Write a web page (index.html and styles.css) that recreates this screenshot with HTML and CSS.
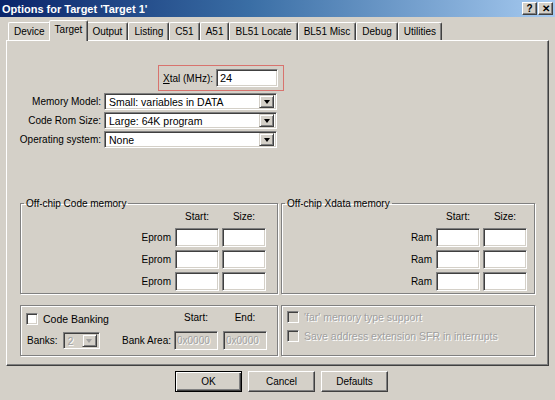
FILE: index.html
```html
<!DOCTYPE html>
<html>
<head>
<meta charset="utf-8">
<title>Options for Target 'Target 1'</title>
<link rel="stylesheet" href="styles.css">
</head>
<body>
<div class="dialog">
  <div class="titlebar">
    <span class="title">Options for Target 'Target 1'</span>
    <span class="tbtns"><span class="tbtn">?</span><span class="tbtn">✕</span></span>
  </div>
  <div class="tabs">
    <span class="tab">Device</span>
    <span class="tab active">Target</span>
    <span class="tab">Output</span>
    <span class="tab">Listing</span>
    <span class="tab">C51</span>
    <span class="tab">A51</span>
    <span class="tab">BL51 Locate</span>
    <span class="tab">BL51 Misc</span>
    <span class="tab">Debug</span>
    <span class="tab">Utilities</span>
  </div>
  <div class="panel">
    <div class="xtal">
      <span class="lbl"><u>X</u>tal (MHz):</span>
      <span class="edit wide">24</span>
    </div>
    <div class="selects">
      <span class="rlbl">Memory Model:</span>
      <span class="combo"><span class="ctext">Small: variables in DATA</span><span class="arrow"><i></i></span></span>
      <span class="rlbl">Code Rom Size:</span>
      <span class="combo"><span class="ctext">Large: 64K program</span><span class="arrow"><i></i></span></span>
      <span class="rlbl">Operating system:</span>
      <span class="combo"><span class="ctext">None</span><span class="arrow"><i></i></span></span>
    </div>
    <div class="groups">
      <fieldset class="group code">
        <legend>Off-chip Code memory</legend>
        <div class="memgrid">
          <span></span><span class="hdr">Start:</span><span class="hdr">Size:</span>
          <span class="rowlbl">Eprom</span><span class="edit"></span><span class="edit"></span>
          <span class="rowlbl">Eprom</span><span class="edit"></span><span class="edit"></span>
          <span class="rowlbl">Eprom</span><span class="edit"></span><span class="edit"></span>
        </div>
      </fieldset>
      <fieldset class="group xdata">
        <legend>Off-chip Xdata memory</legend>
        <div class="memgrid">
          <span></span><span class="hdr">Start:</span><span class="hdr">Size:</span>
          <span class="rowlbl">Ram</span><span class="edit"></span><span class="edit"></span>
          <span class="rowlbl">Ram</span><span class="edit"></span><span class="edit"></span>
          <span class="rowlbl">Ram</span><span class="edit"></span><span class="edit"></span>
        </div>
      </fieldset>
    </div>
    <div class="groups bottom">
      <div class="box banking">
        <div class="brow first">
          <span class="check"><span class="cb"></span>Code Banking</span>
          <span class="spacer"></span>
          <span class="hdr col">Start:</span><span class="hdr col">End:</span>
        </div>
        <div class="brow">
          <span class="banks">Banks:</span>
          <span class="combo small dis"><span class="ctext">2</span><span class="arrow"><i></i></span></span>
          <span class="spacer"></span>
          <span class="bankarea">Bank Area:</span>
          <span class="edit dis col">0x0000</span><span class="edit dis col">0x0000</span>
        </div>
      </div>
      <div class="box farbox">
        <div class="check distext"><span class="cb dis"></span>'far' memory type support</div>
        <div class="check distext"><span class="cb dis"></span>Save address extension SFR in interrupts</div>
      </div>
    </div>
  </div>
  <div class="buttons">
    <span class="btn default"><span>OK</span></span>
    <span class="btn"><span>Cancel</span></span>
    <span class="btn"><span>Defaults</span></span>
  </div>
</div>
</body>
</html>
```
FILE: styles.css
```css
* { box-sizing: border-box; }
html, body { margin: 0; padding: 0; }
body {
  width: 555px;
  height: 400px;
  overflow: hidden;
  background: #d4d0c8;
  font-family: "Liberation Sans", Arial, sans-serif;
  font-size: 10px;
  color: #000;
}
.dialog { width: 555px; height: 400px; }

.titlebar {
  height: 17px;
  background: linear-gradient(to right, #0a246a 0%, #3a6ea5 45%, #a6caf0 100%);
  display: flex;
  align-items: center;
  justify-content: space-between;
  padding: 0 2px 0 2px;
}
.title { color: #fff; font-weight: bold; font-size: 11px; }
.tbtns { display: flex; gap: 1px; }
.tbtn {
  width: 15px; height: 13px;
  background: #d4d0c8;
  border: 1px solid; border-color: #fff #404040 #404040 #fff;
  box-shadow: inset -1px -1px 0 #808080;
  font-size: 10px; font-weight: bold;
  display: flex; align-items: center; justify-content: center;
  line-height: 1;
}

.tabs {
  height: 23px;
  display: flex;
  align-items: flex-end;
  padding-left: 8px;
}
.tab {
  height: 18px;
  padding: 0 5px;
  line-height: 17px;
  border: 1px solid;
  border-bottom: none;
  border-color: #fff #404040 transparent #fff;
  border-radius: 2px 2px 0 0;
  box-shadow: inset -1px 0 0 #808080;
  white-space: nowrap;
}
.tab.active {
  height: 21px;
  margin: 0 -2px -1px;
  padding: 0 5px;
  line-height: 17px;
  background: #d4d0c8;
  position: relative;
  z-index: 1;
}

.panel {
  margin: 0 6px 0 6px;
  height: 326px;
  border: 1px solid;
  border-color: #fff #404040 #404040 #fff;
  box-shadow: inset -1px -1px 0 #808080;
  display: flex;
  flex-direction: column;
}

.edit {
  display: inline-flex;
  align-items: center;
  width: 44px;
  height: 19px;
  background: #fff;
  border: 1px solid;
  border-color: #808080 #fff #fff #808080;
  box-shadow: inset 1px 1px 0 #404040, inset -1px -1px 0 #d4d0c8;
  padding-left: 3px;
}
.edit.wide { width: 62px; height: 18px; font-size: 11px; }
.edit.dis { background: #d4d0c8; color: #a0a0a0; text-shadow: 1px 1px 0 #fff; padding-left: 2px; }

.xtal {
  margin: 24px 0 0 151px;
  width: 126px;
  height: 26px;
  border: 1px solid #d8736e;
  display: flex;
  align-items: center;
  justify-content: flex-end;
  gap: 3px;
  padding-right: 5px;
}
.lbl { white-space: nowrap; }

.selects {
  margin-top: 2px;
  display: grid;
  grid-template-columns: 94px 173px;
  column-gap: 3px;
  row-gap: 2px;
  align-items: center;
}
.rlbl { text-align: right; white-space: nowrap; }
.combo {
  height: 17px;
  background: #fff;
  border: 1px solid;
  border-color: #808080 #fff #fff #808080;
  box-shadow: inset 1px 1px 0 #404040, inset -1px -1px 0 #d4d0c8;
  display: flex;
  align-items: center;
  padding: 2px;
}
.ctext { flex: 1; padding-left: 2px; font-size: 10.5px; }
.arrow {
  width: 15px; height: 13px;
  background: #d4d0c8;
  border: 1px solid; border-color: #d4d0c8 #404040 #404040 #d4d0c8;
  box-shadow: inset 1px 1px 0 #fff, inset -1px -1px 0 #808080;
  display: flex; align-items: center; justify-content: center;
}
.arrow i {
  width: 0; height: 0;
  border-left: 3.5px solid transparent;
  border-right: 3.5px solid transparent;
  border-top: 4px solid #000;
}
.combo.small { width: 37px; height: 17px; }
.combo.dis { background: #d4d0c8; color: #a0a0a0; }
.combo.dis .ctext { text-shadow: 1px 1px 0 #fff; }
.combo.dis .arrow i { border-top-color: #a0a0a0; }

.groups {
  display: flex;
  gap: 3px;
  margin: 50px 0 0 13px;
}
.group {
  margin: 0;
  padding: 0 0 2px;
  border: 1px solid #808080;
  box-shadow: inset 1px 1px 0 #fff, 1px 1px 0 #fff;
  min-inline-size: 0;
}
.group legend { padding: 0 2px; margin-left: 3px; }
.group.code { width: 258px; }
.group.xdata { width: 254px; }
.memgrid {
  display: grid;
  grid-template-columns: auto 44px 44px;
  justify-content: end;
  column-gap: 3px;
  row-gap: 3px;
  align-items: center;
  padding-top: 2px;
}
.code .memgrid { padding-right: 11px; }
.xdata .memgrid { padding-right: 7px; }
.hdr { text-align: center; height: 14px; }
.rowlbl { text-align: right; padding-right: 1px; }

.groups.bottom { margin-top: 11px; }
.box {
  height: 51px;
  border: 1px solid #808080;
  box-shadow: inset 1px 1px 0 #fff, 1px 1px 0 #fff;
}
.banking { width: 258px; padding: 1px 10px 0 5px; }
.farbox { width: 254px; padding: 5px 0 0 5px; display: flex; flex-direction: column; gap: 7px; }
.brow { display: flex; align-items: center; gap: 5px; }
.brow.first { height: 24px; }
.brow.first .col { width: 44px; text-align: center; }
.spacer { flex: 1; }
.check { display: flex; align-items: center; gap: 5px; font-size: 10.5px; }
.distext { color: #a0a0a0; text-shadow: 1px 1px 0 #fff; }
.cb {
  width: 12px; height: 12px;
  background: #fff;
  border: 1px solid;
  border-color: #808080 #fff #fff #808080;
  box-shadow: inset 1px 1px 0 #404040, inset -1px -1px 0 #d4d0c8;
}
.cb.dis { background: #d4d0c8; }
.banks { margin-left: 1px; }
.bankarea { margin-right: -2px; }

.buttons {
  display: flex;
  gap: 6px;
  padding: 5px 0 0 175px;
}
.btn {
  width: 67px;
  height: 21px;
  border: 1px solid;
  border-color: #fff #404040 #404040 #fff;
  box-shadow: inset -1px -1px 0 #808080;
  display: flex;
  align-items: center;
  justify-content: center;
}
.btn.default {
  border: 1px solid #000;
  box-shadow: inset 1px 1px 0 #fff, inset -1px -1px 0 #404040, inset -2px -2px 0 #808080;
}
```
